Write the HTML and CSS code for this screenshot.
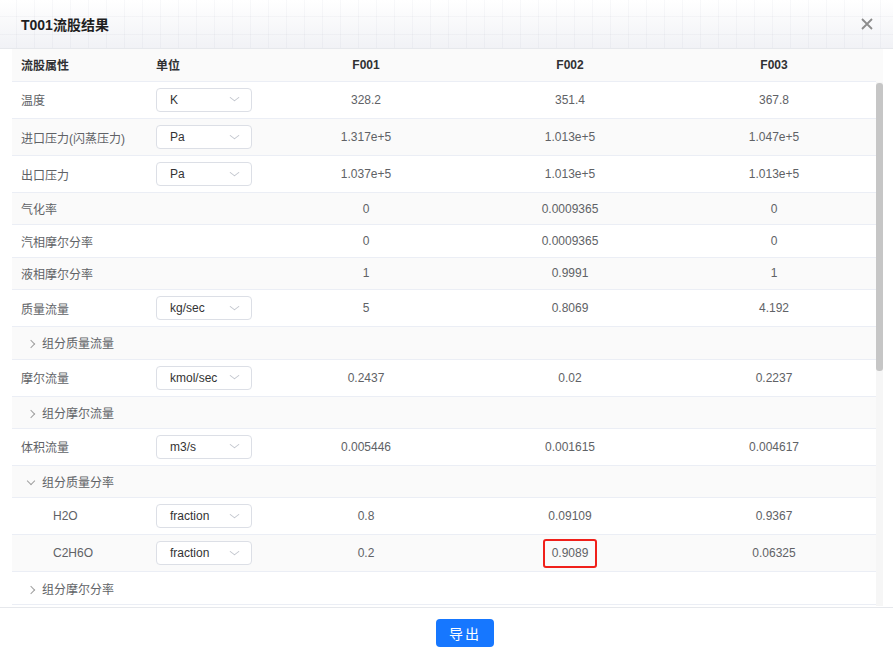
FILE: index.html
```html
<!DOCTYPE html>
<html lang="zh-CN">

<head>
    <meta charset="UTF-8">
    <title>T001流股结果</title>
    <link rel="stylesheet" href="styles.css">
</head>

<body>
    <div class="dialog">
        <div class="dialog-header">
            <span class="dialog-title">T001流股结果</span>
            <button class="close-btn" aria-label="关闭">
                <svg width="12" height="12" viewBox="0 0 12 12">
                    <path d="M1 1 L11 11 M11 1 L1 11" stroke="#8c8c8c" stroke-width="1.8" fill="none" />
                </svg>
            </button>
        </div>

        <div class="dialog-body">
            <div class="table-head">
                <table class="grid">
                    <colgroup>
                        <col class="c-name"><col class="c-unit"><col><col><col>
                    </colgroup>
                    <tr>
                        <th class="left">流股属性</th>
                        <th class="left">单位</th>
                        <th>F001</th>
                        <th>F002</th>
                        <th>F003</th>
                    </tr>
                </table>
            </div>

            <div class="table-wrap">
                <div class="table-scroll">
                    <table class="grid">
                        <colgroup>
                            <col class="c-name"><col class="c-unit"><col><col><col>
                        </colgroup>
                        <tr class="sel-row">
                            <td class="left">温度</td>
                            <td class="left"><div class="select"><span>K</span><i class="arrow"></i></div></td>
                            <td>328.2</td><td>351.4</td><td>367.8</td>
                        </tr>
                        <tr class="sel-row">
                            <td class="left">进口压力(闪蒸压力)</td>
                            <td class="left"><div class="select"><span>Pa</span><i class="arrow"></i></div></td>
                            <td>1.317e+5</td><td>1.013e+5</td><td>1.047e+5</td>
                        </tr>
                        <tr class="sel-row">
                            <td class="left">出口压力</td>
                            <td class="left"><div class="select"><span>Pa</span><i class="arrow"></i></div></td>
                            <td>1.037e+5</td><td>1.013e+5</td><td>1.013e+5</td>
                        </tr>
                        <tr>
                            <td class="left">气化率</td><td></td>
                            <td>0</td><td>0.0009365</td><td>0</td>
                        </tr>
                        <tr>
                            <td class="left">汽相摩尔分率</td><td></td>
                            <td>0</td><td>0.0009365</td><td>0</td>
                        </tr>
                        <tr>
                            <td class="left">液相摩尔分率</td><td></td>
                            <td>1</td><td>0.9991</td><td>1</td>
                        </tr>
                        <tr class="sel-row">
                            <td class="left">质量流量</td>
                            <td class="left"><div class="select"><span>kg/sec</span><i class="arrow"></i></div></td>
                            <td>5</td><td>0.8069</td><td>4.192</td>
                        </tr>
                        <tr>
                            <td class="left group" colspan="2"><i class="caret"></i>组分质量流量</td>
                            <td></td><td></td><td></td>
                        </tr>
                        <tr class="sel-row">
                            <td class="left">摩尔流量</td>
                            <td class="left"><div class="select"><span>kmol/sec</span><i class="arrow"></i></div></td>
                            <td>0.2437</td><td>0.02</td><td>0.2237</td>
                        </tr>
                        <tr>
                            <td class="left group" colspan="2"><i class="caret"></i>组分摩尔流量</td>
                            <td></td><td></td><td></td>
                        </tr>
                        <tr class="sel-row">
                            <td class="left">体积流量</td>
                            <td class="left"><div class="select"><span>m3/s</span><i class="arrow"></i></div></td>
                            <td>0.005446</td><td>0.001615</td><td>0.004617</td>
                        </tr>
                        <tr>
                            <td class="left group" colspan="2"><i class="caret open"></i>组分质量分率</td>
                            <td></td><td></td><td></td>
                        </tr>
                        <tr class="sel-row">
                            <td class="left sub">H2O</td>
                            <td class="left"><div class="select"><span>fraction</span><i class="arrow"></i></div></td>
                            <td>0.8</td><td>0.09109</td><td>0.9367</td>
                        </tr>
                        <tr class="sel-row">
                            <td class="left sub">C2H6O</td>
                            <td class="left"><div class="select"><span>fraction</span><i class="arrow"></i></div></td>
                            <td>0.2</td><td><span class="mark">0.9089</span></td><td>0.06325</td>
                        </tr>
                        <tr>
                            <td class="left group" colspan="2"><i class="caret"></i>组分摩尔分率</td>
                            <td></td><td></td><td></td>
                        </tr>
                    </table>
                </div>
                <!-- vertical scrollbar of the result list -->
                <div class="scrollbar">
                    <div class="scrollbar-thumb"></div>
                </div>
            </div>
        </div>

        <div class="dialog-footer">
            <button class="btn-primary">导出</button>
        </div>
    </div>
</body>

</html>
```

FILE: styles.css
```css
html,
body {
    margin: 0;
    height: 100%;
}

body {
    font-family: "Liberation Sans", "Noto Sans CJK SC", sans-serif;
    font-size: 12px;
    color: #606266;
    background-color: #fff;
}

.dialog {
    display: flex;
    flex-direction: column;
    height: 100vh;
}

.dialog-header {
    flex: none;
    height: 48px;
    display: flex;
    align-items: center;
    justify-content: space-between;
    padding: 0 20px 0 21px;
    border-bottom: 1px solid #e6e8ec;
    background-color: #f4f5f8;
    background-image:
        linear-gradient(to right, rgba(60, 70, 110, 0.035) 1px, transparent 1px),
        linear-gradient(to bottom, rgba(60, 70, 110, 0.035) 1px, transparent 1px),
        linear-gradient(to bottom, #ffffff, #f1f2f6);
    background-size: 18px 18px, 18px 18px, auto;
    background-position: 16px 16px, 16px 16px, 0 0;
}

.dialog-title {
    font-size: 14px;
    font-weight: bold;
    color: #1f1f1f;
}

.close-btn {
    border: none;
    background: none;
    padding: 0;
    width: 12px;
    height: 12px;
    cursor: pointer;
    display: flex;
}

.dialog-body {
    flex: 1;
    min-height: 0;
    display: flex;
    flex-direction: column;
    padding: 0 10px 1px 12px;
}

.table-head {
    flex: none;
    background-color: #fafafa;
    padding-right: 7px;
}

.table-wrap {
    flex: 1;
    min-height: 0;
    display: flex;
}

.table-scroll {
    flex: 1;
    min-width: 0;
    overflow: hidden;
}

.scrollbar {
    flex: none;
    width: 7px;
    background-color: #f6f6f6;
}

.scrollbar-thumb {
    height: 288px;
    margin-top: 1px;
    background-color: #c6c6c6;
    border-radius: 3px;
}

.grid {
    width: 864px;
    border-collapse: collapse;
    table-layout: fixed;
}

.c-name {
    width: 135px;
}

.c-unit {
    width: 117px;
}

.grid th,
.grid td {
    height: 32.4px;
    padding: 0 8px;
    border-bottom: 1px solid #ebeef5;
    text-align: center;
    white-space: nowrap;
    box-sizing: border-box;
}

.grid th {
    color: #303133;
    font-weight: bold;
    height: 32px;
}

.grid .left {
    text-align: left;
    padding-left: 9px;
}

.grid td.left + td.left {
    padding-left: 9px;
}

.grid tr:nth-child(even) td {
    background-color: #fafafa;
}

.grid tr.sel-row td {
    height: 37px;
}

.grid td.sub {
    padding-left: 41px;
}

.grid td.group {
    padding-left: 16px;
}

.caret {
    display: inline-block;
    width: 5px;
    height: 5px;
    border-right: 1px solid #a0a0a0;
    border-bottom: 1px solid #a0a0a0;
    transform: rotate(-45deg);
    margin: 0 8px 1px 0;
}

.caret.open {
    transform: rotate(45deg);
    margin-bottom: 3px;
}

.select {
    width: 96px;
    height: 24px;
    box-sizing: border-box;
    border: 1px solid #dcdfe6;
    border-radius: 4px;
    background-color: #fff;
    display: flex;
    align-items: center;
    justify-content: space-between;
    padding: 0 13px 0 13px;
    color: #333;
}

.arrow {
    display: inline-block;
    width: 6px;
    height: 6px;
    border-right: 1px solid #c0c4cc;
    border-bottom: 1px solid #c0c4cc;
    transform: scaleY(0.75) rotate(45deg);
    margin-bottom: 4px;
}

.mark {
    display: inline-block;
    border: 2px solid #f0201a;
    border-radius: 3px;
    padding: 5px 7px;
    line-height: 15px;
}

.dialog-footer {
    flex: none;
    height: 51px;
    box-sizing: border-box;
    border-top: 1px solid #e6e8ec;
    display: flex;
    justify-content: center;
    padding: 11px 0 0 37px;
}

.btn-primary {
    width: 58px;
    height: 28px;
    border: none;
    border-radius: 4px;
    background-color: #1677ff;
    color: #fff;
    font-family: "Noto Sans CJK SC", sans-serif;
    font-size: 14px;
    letter-spacing: 2px;
    cursor: pointer;
}
```
